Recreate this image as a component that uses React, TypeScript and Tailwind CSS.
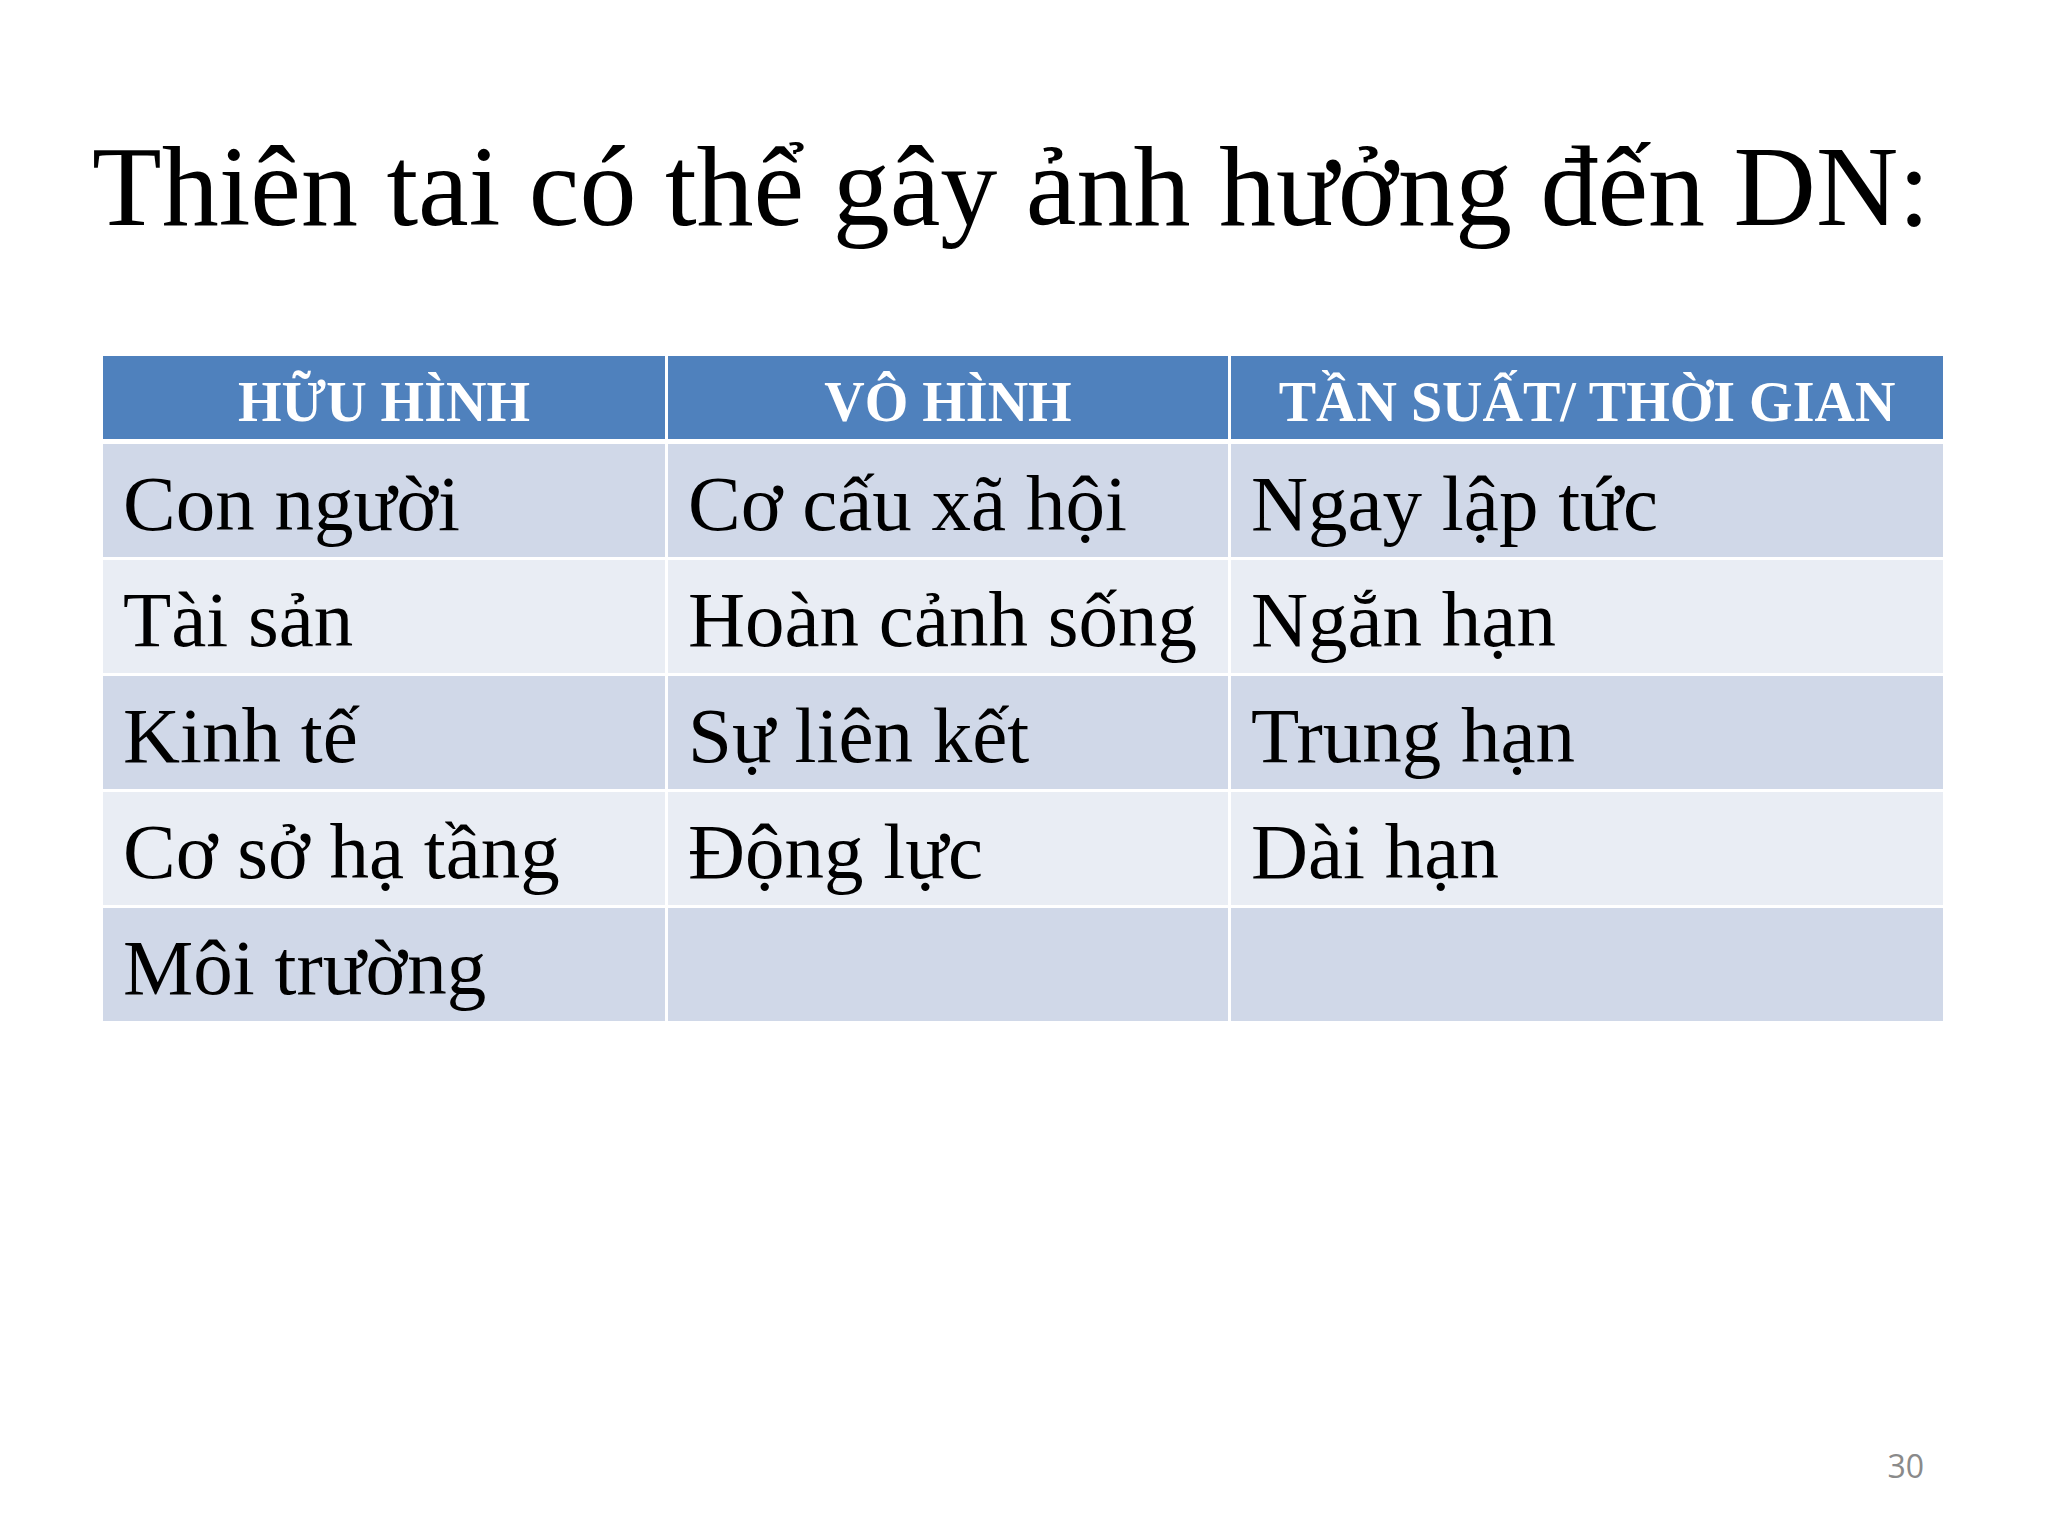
const rows: [string, string, string][] = [
  ["Con người", "Cơ cấu xã hội", "Ngay lập tức"],
  ["Tài sản", "Hoàn cảnh sống", "Ngắn hạn"],
  ["Kinh tế", "Sự liên kết", "Trung hạn"],
  ["Cơ sở hạ tầng", "Động lực", "Dài hạn"],
  ["Môi trường", "", ""],
];

const headers = ["HỮU HÌNH", "VÔ HÌNH", "TẦN SUẤT/ THỜI GIAN"];

export default function App() {
  return (
    <div
      className="relative w-[2048px] h-[1536px] bg-white text-black overflow-hidden"
      style={{ fontFamily: '"Liberation Serif", "Times New Roman", serif' }}
    >
      {/* Title */}
      <h1 className="pl-[92px] pt-[130px] text-[114px] leading-none font-normal whitespace-nowrap">
        Thiên tai có thể gây ảnh hưởng đến DN:
      </h1>

      {/* Table */}
      <div className="ml-[103px] mt-[112px] w-[1840px] flex flex-col gap-[5px]">
        <div className="grid grid-cols-[562px_560px_712px] gap-[3px]">
          {headers.map((h) => (
            <div
              key={h}
              className="h-[83px] bg-[#4f81bd] text-white font-bold text-[56px] leading-none text-center pt-[18px] whitespace-nowrap"
            >
              {h}
            </div>
          ))}
        </div>
        <div className="flex flex-col gap-[3px]">
          {rows.map((r, i) => (
            <div key={i} className="grid grid-cols-[562px_560px_712px] gap-[3px]">
              {r.map((c, j) => (
                <div
                  key={j}
                  className={`h-[113px] pl-[20px] pt-[20px] text-[79px] leading-none whitespace-nowrap ${
                    i % 2 === 0 ? "bg-[#d0d8e8]" : "bg-[#e9edf4]"
                  }`}
                >
                  {c}
                </div>
              ))}
            </div>
          ))}
        </div>
      </div>

      {/* Slide number */}
      <div
        className="absolute right-[124px] bottom-[54px] text-[32px] leading-none text-[#8a8a8a]"
        style={{ fontFamily: '"Open Sans", sans-serif' }}
      >
        30
      </div>
    </div>
  );
}
